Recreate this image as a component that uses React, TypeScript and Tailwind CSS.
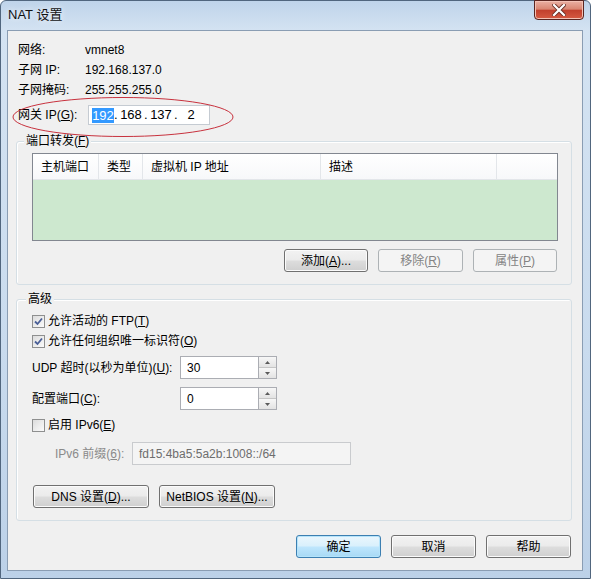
import React from 'react';

const font = "font-['Liberation_Sans','Noto_Sans_CJK_SC',sans-serif]";

type BtnProps = {
	children: React.ReactNode;
	className?: string;
	disabled?: boolean;
	primary?: boolean;
};

const Btn = ({ children, className = '', disabled, primary }: BtnProps) => {
	let look =
		'border-[#707070] bg-[linear-gradient(#f2f2f2,#ebebeb_48%,#dddddd_52%,#cfcfcf)] text-black shadow-[inset_0_0_0_1px_#fbfbfb]';
	if (disabled) look = 'border-[#adb2b5] bg-[#f4f4f4] text-[#838383]';
	if (primary)
		look =
			'border-[#3c7fb1] bg-[linear-gradient(#eaf6fd,#d9f0fc_48%,#bee6fd_52%,#a7d9f5)] text-black shadow-[inset_0_0_0_1px_#b5e4fb]';
	return (
		<button
			className={`h-[23px] rounded-[3px] border text-[12px] leading-none flex items-center justify-center ${look} ${className}`}
		>
			{children}
		</button>
	);
};

const Check = ({ checked }: { checked?: boolean }) => (
	<span className="w-[13px] h-[13px] border border-[#8e8f8f] bg-[linear-gradient(135deg,#dcdcdc,#fbfbfb)] flex items-center justify-center shrink-0">
		{checked && (
			<svg width="9" height="9" viewBox="0 0 9 9">
				<path d="M1 4.5 L3.5 7 L8 1.5" fill="none" stroke="#4a5f97" strokeWidth="1.8" />
			</svg>
		)}
	</span>
);

const Spin = ({ value }: { value: string }) => (
	<div className="flex h-[23px]">
		<div className="w-[78px] h-full bg-white border border-[#abadb3] border-r-0 pl-[6px] flex items-center text-[12px]">
			{value}
		</div>
		<div className="w-[19px] h-full border border-[#abadb3] flex flex-col">
			<div className="flex-1 border-b border-[#c5c5c5] bg-[linear-gradient(#f7f7f7,#e3e3e3)] flex items-center justify-center">
				<svg width="5" height="3" viewBox="0 0 5 3">
					<path d="M0 3 L2.5 0 L5 3Z" fill="#5a5a5a" />
				</svg>
			</div>
			<div className="flex-1 bg-[linear-gradient(#f7f7f7,#e3e3e3)] flex items-center justify-center">
				<svg width="5" height="3" viewBox="0 0 5 3">
					<path d="M0 0 L2.5 3 L5 0Z" fill="#5a5a5a" />
				</svg>
			</div>
		</div>
	</div>
);

const GroupLabel = ({ children, left }: { children: React.ReactNode; left: string }) => (
	<span className={`absolute -top-[9px] ${left} bg-[#f0f0f0] px-[2px] text-[12px] leading-[16px]`}>{children}</span>
);

const App = () => {
	const cols = [
		{ w: 'w-[66px]', t: '主机端口' },
		{ w: 'w-[44px]', t: '类型' },
		{ w: 'w-[178px]', t: '虚拟机 IP 地址' },
		{ w: 'w-[176px]', t: '描述' },
	];

	return (
		<div className={`min-h-screen bg-white ${font} text-black`}>
			<div className="relative w-[591px] h-[579px] rounded-t-[6px] border border-[#51667e] bg-[linear-gradient(#bfd4ea,#d4e3f2_30px,#c9dbee_60%,#bcd1e8)] flex flex-col">
				{/* title bar */}
				<div className="h-[29px] flex items-start justify-between pl-[7px] pr-[6px]">
					<span className="mt-[6px] text-[13px] leading-[16px] text-[#111] [text-shadow:0_0_6px_#fff]">NAT 设置</span>
					<div className="w-[50px] h-[20px] -mt-px rounded-b-[4px] border border-[#5a2520] bg-[linear-gradient(#eab0a3,#d98672_45%,#c2402d_52%,#d65a42)] flex items-center justify-center shadow-[inset_0_0_0_1px_#f3c1b5]">
						<svg width="14" height="12" viewBox="0 0 14 12">
							<path d="M2 1 L12 11 M12 1 L2 11" stroke="#6b3026" strokeWidth="4" strokeLinecap="square" />
							<path d="M2 1 L12 11 M12 1 L2 11" stroke="#fff" strokeWidth="2.2" strokeLinecap="square" />
						</svg>
					</div>
				</div>

				{/* client area */}
				<div className="ml-[6px] w-[576px] h-[541px] border border-[#8a9db3] bg-[#f0f0f0] text-[12px]">
					{/* info rows */}
					<div className="pl-[10px] pt-[9px]">
						{[
							['网络:', 'vmnet8'],
							['子网 IP:', '192.168.137.0'],
							['子网掩码:', '255.255.255.0'],
						].map(([k, v]) => (
							<div key={k} className="h-[20px] flex items-center">
								<span className="w-[67px]">{k}</span>
								<span>{v}</span>
							</div>
						))}
						<div className="mt-[5px] h-[20px] flex items-center">
							<span className="w-[70px]">
								网关 IP(<u>G</u>):
							</span>
							<div className="w-[122px] h-[20px] bg-white border border-[#c5cbd2] flex items-center pl-[3px] text-[13px]">
								<span className="w-[22px] text-center bg-[#3399ff] text-white leading-[15px]">192</span>
								<span className="w-[4px]">.</span>
								<span className="w-[26px] text-center">168</span>
								<span className="w-[4px]">.</span>
								<span className="w-[26px] text-center">137</span>
								<span className="w-[4px]">.</span>
								<span className="w-[26px] text-center">2</span>
							</div>
						</div>
					</div>

					{/* port forwarding */}
					<div className="relative ml-[8px] mt-[16px] w-[556px] h-[144px] border border-[#d5dfe5] rounded-[3px] shadow-[inset_1px_1px_0_#fff] pl-[15px] pt-[11px]">
						<GroupLabel left="left-[7px]">
							端口转发(<u>F</u>)
						</GroupLabel>
						<div className="w-[526px] h-[88px] border border-[#828790] flex flex-col">
							<div className="h-[26px] bg-[linear-gradient(#ffffff,#f7f8fa)] border-b border-[#e3e6ea] flex">
								{cols.map((c) => (
									<div key={c.t} className={`${c.w} h-full border-r border-[#e3e6ea] pl-[8px] flex items-center`}>
										{c.t}
									</div>
								))}
								<div className="flex-1" />
							</div>
							<div className="flex-1 bg-[#cde8cf]" />
						</div>
						<div className="w-[526px] mt-[8px] flex justify-end gap-[10px] pr-px">
							<Btn className="w-[84px]">
								添加(<u>A</u>)...
							</Btn>
							<Btn className="w-[85px]" disabled>
								移除(<u>R</u>)
							</Btn>
							<Btn className="w-[84px]" disabled>
								属性(<u>P</u>)
							</Btn>
						</div>
					</div>

					{/* advanced */}
					<div className="relative ml-[8px] mt-[14px] w-[556px] h-[222px] border border-[#d5dfe5] rounded-[3px] shadow-[inset_1px_1px_0_#fff] pl-[15px] pt-[11px]">
						<GroupLabel left="left-[9px]">高级</GroupLabel>
						<div className="h-[20px] flex items-center gap-[3px]">
							<Check checked />
							<span>
								允许活动的 FTP(<u>T</u>)
							</span>
						</div>
						<div className="h-[20px] flex items-center gap-[3px]">
							<Check checked />
							<span>
								允许任何组织唯一标识符(<u>O</u>)
							</span>
						</div>
						<div className="mt-[5px] flex items-center">
							<span className="w-[148px]">
								UDP 超时(以秒为单位)(<u>U</u>):
							</span>
							<Spin value="30" />
						</div>
						<div className="mt-[8px] flex items-center">
							<span className="w-[148px]">
								配置端口(<u>C</u>):
							</span>
							<Spin value="0" />
						</div>
						<div className="mt-[5px] h-[20px] flex items-center gap-[3px]">
							<Check />
							<span>
								启用 IPv6(<u>E</u>)
							</span>
						</div>
						<div className="mt-[7px] flex items-center pl-[23px]">
							<span className="w-[77px] text-[#8a8a8a]">
								IPv6 前缀(<u>6</u>):
							</span>
							<div className="w-[219px] h-[23px] border border-[#c9cbce] bg-[#f4f4f4] pl-[6px] flex items-center text-[#6d6d6d]">
								fd15:4ba5:5a2b:1008::/64
							</div>
						</div>
						<div className="mt-[20px] ml-px flex gap-[10px]">
							<Btn className="w-[116px]">
								DNS 设置(<u>D</u>)...
							</Btn>
							<Btn className="w-[116px]">
								NetBIOS 设置(<u>N</u>)...
							</Btn>
						</div>
					</div>

					{/* bottom buttons */}
					<div className="mt-[14px] pr-[11px] flex justify-end gap-[10px]">
						<Btn className="w-[85px]" primary>
							确定
						</Btn>
						<Btn className="w-[85px]">取消</Btn>
						<Btn className="w-[85px]">帮助</Btn>
					</div>
				</div>

				{/* red annotation ellipse */}
				<svg className="absolute left-0 top-0 pointer-events-none" width="260" height="150">
					<ellipse cx="122" cy="116" rx="110" ry="19.5" fill="none" stroke="#c8323e" strokeWidth="1" />
				</svg>
			</div>
		</div>
	);
};

export default App;
